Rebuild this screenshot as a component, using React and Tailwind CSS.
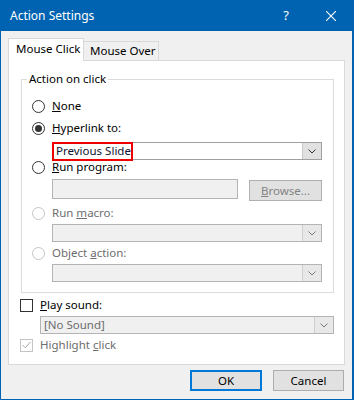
import React from 'react';

const FONT = "font-['Noto_Sans','Open_Sans',sans-serif]";

function Chevron({ color = '#333' }) {
  return (
    <svg width="8" height="5" viewBox="0 0 8 5" fill="none">
      <path d="M0.5 0.5 L4 4 L7.5 0.5" stroke={color} strokeWidth="1" />
    </svg>
  );
}

function Radio({ checked, disabled }) {
  return (
    <div
      className={`w-[13px] h-[13px] rounded-full border flex items-center justify-center shrink-0 ${
        disabled ? 'border-[#c4c4c4] bg-white' : 'border-[#333] bg-white'
      }`}
    >
      {checked && <div className="w-[7px] h-[7px] rounded-full bg-[#333]" />}
    </div>
  );
}

function Combo({ width, text, disabled, children }) {
  return (
    <div
      className={`relative flex h-[18px] border ${
        disabled ? 'border-[#b4b4b4] bg-[#f0f0f0]' : 'border-[#a0a0a0] bg-white'
      }`}
      style={{ width }}
    >
      <div className={`flex-1 flex items-center pl-[3px] text-[11.5px] leading-none whitespace-nowrap ${disabled ? 'text-[#6d6d6d]' : 'text-[#101030]'}`}>
        {text}
      </div>
      <div className={`w-[19px] flex items-center justify-center border-l ${disabled ? 'bg-[#e8e8e8] border-[#d0d0d0]' : 'bg-[#e1e1e1] border-[#c8c8c8]'}`}>
        <Chevron color={disabled ? '#777' : '#333'} />
      </div>
      {children}
    </div>
  );
}

function OptionRow({ checked, disabled, children }) {
  return (
    <div className="flex items-center gap-[7px] h-[14px]">
      <Radio checked={checked} disabled={disabled} />
      <span className={`text-[11.5px] leading-none whitespace-nowrap ${disabled ? 'text-[#6d6d6d]' : 'text-black'}`}>{children}</span>
    </div>
  );
}

export default function App() {
  return (
    <div className={`w-[354px] h-[400px] bg-[#0063b1] pl-px pt-px pr-[2px] pb-px flex flex-col ${FONT}`}>
      {/* Title bar */}
      <div className="h-[30px] flex items-center pl-[9px] text-white">
        <span className="text-[12px]">Action Settings</span>
        <span className="ml-auto text-[13px] mr-[37px]">?</span>
        <svg width="10" height="10" viewBox="0 0 10 10" className="mr-[16px]">
          <path d="M0 0 L10 10 M10 0 L0 10" stroke="white" strokeWidth="1.1" />
        </svg>
      </div>

      {/* Body */}
      <div className="flex-1 bg-[#f0f0f0] pl-[7px] pt-[7px]">
        {/* Tabs */}
        <div className="flex items-end h-[22px] text-[11.5px] whitespace-nowrap">
          <div className="w-[76px] h-[23px] -mb-px relative z-10 bg-white border border-b-0 border-[#d9d9d9] flex items-center pl-[7px] pb-[2px] text-black">
            Mouse Click
          </div>
          <div className="w-[75px] h-[19px] bg-[#f0f0f0] border border-b-0 border-l-0 border-[#d9d9d9] flex items-center pl-[6px] text-black">
            Mouse Over
          </div>
        </div>

        {/* Tab panel */}
        <div className="w-[337px] h-[305px] bg-white border border-[#d9d9d9] pl-[11px] pt-[18px]">
          {/* Group box */}
          <div className="relative ml-px w-[313px] border border-[#dcdcdc] pl-[10px] pt-[19px] pb-[10px]">
            <span className="absolute -top-[9px] left-[5px] px-[2px] bg-white text-[11.5px] text-black leading-[16px] whitespace-nowrap">
              Action on click
            </span>
            <div className="flex flex-col">
              <OptionRow checked={false}><u>N</u>one</OptionRow>
              <div className="mt-[8px]">
                <OptionRow checked><u>H</u>yperlink to:</OptionRow>
              </div>
              <div className="mt-[7px] ml-[20px]">
                <Combo width={270} text="Previous Slide">
                  <div className="absolute -left-px -top-px w-[81px] h-[19px] border-2 border-[#ee0000]" />
                </Combo>
              </div>
              <div className="mt-0">
                <OptionRow checked={false}><u>R</u>un program:</OptionRow>
              </div>
              <div className="mt-[5px] ml-[20px] flex items-start gap-[11px]">
                <div className="w-[186px] h-[20px] border border-[#b4b4b4] bg-[#f0f0f0]" />
                <div className="mt-px w-[73px] h-[21px] border border-[#b0b0b0] bg-[#e1e1e1] flex items-center justify-center text-[11.5px] text-[#838383]">
                  <span><u>B</u>rowse...</span>
                </div>
              </div>
              <div className="mt-[5px]">
                <OptionRow disabled>Run <u>m</u>acro:</OptionRow>
              </div>
              <div className="mt-[4px] ml-[20px]">
                <Combo width={270} disabled text="" />
              </div>
              <div className="mt-[4px]">
                <OptionRow disabled>Object <u>a</u>ction:</OptionRow>
              </div>
              <div className="mt-[4px] ml-[20px]">
                <Combo width={270} disabled text="" />
              </div>
            </div>
          </div>

          {/* Play sound */}
          <div className="mt-[5px] flex items-center gap-[7px] h-[14px]">
            <div className="w-[13px] h-[13px] border border-[#333] bg-white shrink-0" />
            <span className="text-[11.5px] leading-none text-black"><u>P</u>lay sound:</span>
          </div>
          <div className="mt-[4px] ml-[20px]">
            <Combo width={294} disabled text="[No Sound]" />
          </div>

          {/* Highlight click */}
          <div className="mt-[4px] flex items-center gap-[7px] h-[14px]">
            <div className="w-[13px] h-[13px] border border-[#c4c4c4] bg-white shrink-0 flex items-center justify-center">
              <svg width="9" height="8" viewBox="0 0 9 8" fill="none">
                <path d="M0.5 4 L3.3 6.8 L8.5 0.8" stroke="#a8a8a8" strokeWidth="1" />
              </svg>
            </div>
            <span className="text-[11.5px] leading-none text-[#6d6d6d]">Highlight <u>c</u>lick</span>
          </div>
        </div>

        {/* Buttons */}
        <div className="w-[337px] mt-[5px] flex justify-end gap-[11px] pr-px">
          <button className="w-[72px] h-[21px] border-2 border-[#0078d7] bg-[#e1e1e1] text-[11.5px] text-black flex items-center justify-center">
            OK
          </button>
          <button className="w-[71px] h-[21px] border border-[#adadad] bg-[#e1e1e1] text-[11.5px] text-black flex items-center justify-center">
            Cancel
          </button>
        </div>
      </div>
    </div>
  );
}
